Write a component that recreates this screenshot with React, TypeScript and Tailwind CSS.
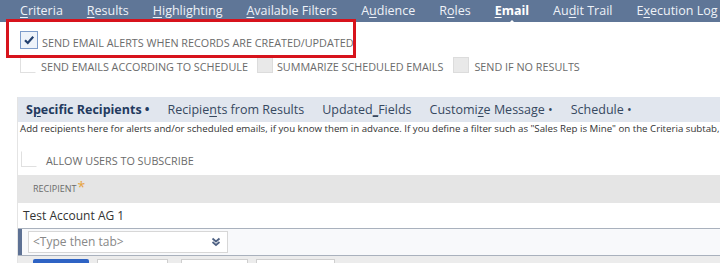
import React from 'react';

const navItems: { pre: string; key: string; post: string; active?: boolean }[] = [
  { pre: '', key: 'C', post: 'riteria' },
  { pre: '', key: 'R', post: 'esults' },
  { pre: '', key: 'H', post: 'ighlighting' },
  { pre: '', key: 'A', post: 'vailable Filters' },
  { pre: 'A', key: 'u', post: 'dience' },
  { pre: 'R', key: 'o', post: 'les' },
  { pre: '', key: 'E', post: 'mail', active: true },
  { pre: 'Au', key: 'd', post: 'it Trail' },
  { pre: 'E', key: 'x', post: 'ecution Log' },
];

function Checkbox({ checked, disabled }: { checked?: boolean; disabled?: boolean }) {
  if (checked) {
    return (
      <span className="flex h-[18px] w-[18px] shrink-0 items-center justify-center border border-[#7d9ccb] bg-[#eef3fa]">
        <svg viewBox="0 0 12 12" className="h-3 w-3">
          <path d="M2 6.2 L4.8 9 L10.2 2.8" fill="none" stroke="#23406f" strokeWidth="2.2" />
        </svg>
      </span>
    );
  }
  return (
    <span
      className={`block h-4 w-4 shrink-0 border ${
        disabled ? 'border-[#dcdcdc] bg-[#e9e9e9]' : 'border-[#e0e0e0] border-t-white border-r-white bg-white'
      }`}
    />
  );
}

function Label({ children, className = '' }: { children: React.ReactNode; className?: string }) {
  return (
    <span className={`whitespace-nowrap text-[10.8px] uppercase leading-[12px] text-[#6b6b6b] ${className}`}>
      {children}
    </span>
  );
}

export default function App() {
  return (
    <div
      className="relative h-[263px] w-[720px] overflow-hidden bg-white"
      style={{ fontFamily: '"Open Sans", "Liberation Sans", sans-serif' }}
    >
      {/* tabs */}
      <div className="flex h-[22px] items-center gap-[24px] bg-[#5f7697] pl-5 text-[12.5px] text-[#eef2f8]">
        {navItems.map((n) => (
          <span key={n.pre + n.key + n.post} className={`relative whitespace-nowrap ${n.active ? 'font-bold text-white' : ''}`}>
            {n.pre}
            <span className="underline underline-offset-2">{n.key}</span>
            {n.post}
            {n.active && (
              <span className="absolute bottom-[-4px] left-1/2 -ml-[4px] h-0 w-0 border-x-[4px] border-b-[4px] border-x-transparent border-b-white" />
            )}
          </span>
        ))}
      </div>

      {/* email options */}
      <div className="mt-[9px] flex h-[18px] items-end gap-[4px] pl-5">
        <Checkbox checked />
        <Label>Send Email Alerts When Records Are Created/Updated</Label>
      </div>
      <div className="mt-[8px] flex h-4 items-end pl-5">
        <Checkbox />
        <Label className="ml-[5px] mr-[9px]">Send Emails According to Schedule</Label>
        <Checkbox disabled />
        <Label className="ml-[4px] mr-[10px]">Summarize Scheduled Emails</Label>
        <Checkbox disabled />
        <Label className="ml-[5px]">Send If No Results</Label>
      </div>

      {/* subtabs */}
      <div className="ml-[17px] mt-[24px] border-l border-[#e4e4e4]">
        <div className="flex h-[25px] items-center gap-[18px] whitespace-nowrap bg-[#e1e6ee] pl-[8px] pt-[2px] text-[12.5px] text-[#36485f]">
          <span className="font-bold text-[#233a5e]">
            S<span className="underline underline-offset-2">p</span>ecific Recipients •
          </span>
          <span>
            Recipie<span className="underline underline-offset-2">n</span>ts from Results
          </span>
          <span>
            Updated<span className="underline underline-offset-2">_</span>Fields
          </span>
          <span>
            Customi<span className="underline underline-offset-2">z</span>e Message •
          </span>
          <span>Schedule •</span>
        </div>
        <div className="h-[14px] whitespace-nowrap pl-[2px] text-[9.7px] leading-[14px] text-[#333]">
          Add recipients here for alerts and/or scheduled emails, if you know them in advance. If you define a filter such as "Sales Rep is Mine" on the Criteria subtab, the alert is sent to the sales rep.
        </div>
        <div className="mt-[15px] flex h-4 items-end gap-[9px] pl-[3px]">
          <Checkbox />
          <Label>Allow Users to Subscribe</Label>
        </div>

        <div className="mt-[8px] flex h-[28px] items-center bg-[#e5e5e5] pl-[15px] text-[9px] uppercase text-[#6b6b6b]">
          Recipient<span className="ml-[1px] -mt-[4px] text-[14px] leading-none text-[#e6a23c]">*</span>
        </div>
        <div className="flex h-[25px] items-center pl-[5px] text-[12px] text-[#333]">Test Account AG 1</div>
        <div className="flex h-[27px] items-center border-t border-[#a9b1bd] bg-[#f8f9fb]">
          <span className="h-full w-[4px] bg-[#5d7194]" />
          <div className="ml-[6px] flex h-[22px] w-[200px] items-center justify-between border border-[#d7d7d7] bg-white pl-[4px] pr-[6px] text-[12px] text-[#888]">
            <span>&lt;Type then tab&gt;</span>
            <svg viewBox="0 0 10 10" className="h-[10px] w-[10px]">
              <path d="M1.5 1.5 L5 4.5 L8.5 1.5 M1.5 5 L5 8 L8.5 5" fill="none" stroke="#4e6183" strokeWidth="1.8" />
            </svg>
          </div>
        </div>
        <div className="flex h-[10px] border-t border-[#a9b1bd] bg-[#ececec] pl-[15px] pt-[3px]">
          <span className="w-[56px] rounded-t-[2px] bg-[#2e63c4]" />
          <span className="ml-[8px] w-[71px] border border-b-0 border-[#cfcfcf] bg-white" />
          <span className="ml-[13px] w-[67px] border border-b-0 border-[#cfcfcf] bg-white" />
          <span className="ml-[8px] w-[79px] border border-b-0 border-[#cfcfcf] bg-white" />
        </div>
      </div>

      {/* highlight annotation */}
      <div className="absolute left-[6px] top-[19px] h-[39px] w-[350px] border-[3px] border-[#d7131c]" />
    </div>
  );
}
